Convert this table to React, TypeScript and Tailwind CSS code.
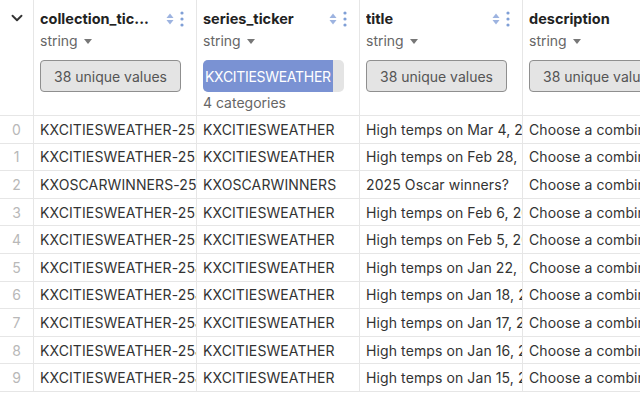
import { ChevronDown } from 'lucide-react';

const rows = [
  ['KXCITIESWEATHER-25MAR04', 'KXCITIESWEATHER', 'High temps on Mar 4, 2025?'],
  ['KXCITIESWEATHER-25FEB28', 'KXCITIESWEATHER', 'High temps on Feb 28, 2025?'],
  ['KXOSCARWINNERS-25', 'KXOSCARWINNERS', '2025 Oscar winners?'],
  ['KXCITIESWEATHER-25FEB06', 'KXCITIESWEATHER', 'High temps on Feb 6, 2025?'],
  ['KXCITIESWEATHER-25FEB05', 'KXCITIESWEATHER', 'High temps on Feb 5, 2025?'],
  ['KXCITIESWEATHER-25JAN22', 'KXCITIESWEATHER', 'High temps on Jan 22, 2025?'],
  ['KXCITIESWEATHER-25JAN18', 'KXCITIESWEATHER', 'High temps on Jan 18, 2025?'],
  ['KXCITIESWEATHER-25JAN17', 'KXCITIESWEATHER', 'High temps on Jan 17, 2025?'],
  ['KXCITIESWEATHER-25JAN16', 'KXCITIESWEATHER', 'High temps on Jan 16, 2025?'],
  ['KXCITIESWEATHER-25JAN15', 'KXCITIESWEATHER', 'High temps on Jan 15, 2025?'],
];

function SortIcons() {
  return (
    <div className="flex items-center gap-[6px] shrink-0 mr-[6px]">
      <svg width="8" height="12" viewBox="0 0 8 12">
        <path d="M4 0.5 L7.5 5 L0.5 5 Z" fill="#9db3e0" />
        <path d="M4 11.5 L7.5 7 L0.5 7 Z" fill="#9db3e0" />
      </svg>
      <svg width="4" height="16" viewBox="0 0 4 16">
        <circle cx="2" cy="2" r="1.6" fill="#7f9fd6" />
        <circle cx="2" cy="8" r="1.6" fill="#7f9fd6" />
        <circle cx="2" cy="14" r="1.6" fill="#7f9fd6" />
      </svg>
    </div>
  );
}

function TypeLabel() {
  return (
    <div className="flex items-center gap-[6px] text-[14px] text-[#666] mt-[3px] leading-[18px]">
      <span>string</span>
      <svg width="8" height="5" viewBox="0 0 8 5">
        <path d="M0 0 L8 0 L4 5 Z" fill="#777" />
      </svg>
    </div>
  );
}

function UniquePill() {
  return (
    <div className="mt-[10px] h-[32px] w-[141px] rounded-[4px] border border-[#8f8f8f] bg-[#e4e4e4] text-[14px] text-[#555] flex items-center justify-center whitespace-nowrap overflow-hidden">
      38 unique values
    </div>
  );
}

function HeaderCell({ name, children, icons = true, width }: { name: string; children: React.ReactNode; icons?: boolean; width: string }) {
  return (
    <div className={`${width} shrink-0 border-r border-[#e6e6e6] px-[6px] pt-[9px] overflow-hidden`}>
      <div className="flex items-center justify-between h-[20px]">
        <span className="font-bold text-[14.5px] text-[#222] whitespace-nowrap overflow-hidden">{name}</span>
        {icons && <SortIcons />}
      </div>
      <TypeLabel />
      {children}
    </div>
  );
}

export default function App() {
  return (
    <div className="w-[640px] h-[400px] overflow-hidden bg-white" style={{ fontFamily: 'Inter, "Noto Sans", sans-serif' }}>
      <div className="flex h-[116px] border-b border-[#e6e6e6]">
        <div className="w-[34px] shrink-0 border-r border-[#e6e6e6] flex justify-center pt-[9px]">
          <ChevronDown className="w-[18px] h-[18px] text-[#333]" strokeWidth={2.5} />
        </div>
        <HeaderCell name="collection_tic..." width="w-[163px]">
          <UniquePill />
        </HeaderCell>
        <HeaderCell name="series_ticker" width="w-[163px]">
          <div className="mt-[10px] h-[32px] w-[141px] rounded-[5px] bg-[#e4e4e4] flex overflow-hidden">
            <div className="w-[130px] bg-[#7a92d3] text-white text-[14px] flex items-center pl-[2px] whitespace-nowrap overflow-hidden tracking-[-0.3px]">
              KXCITIESWEATHER
            </div>
          </div>
          <div className="text-[14px] text-[#666] mt-[2px] leading-[18px]">4 categories</div>
        </HeaderCell>
        <HeaderCell name="title" width="w-[163px]">
          <UniquePill />
        </HeaderCell>
        <HeaderCell name="description" icons={false} width="w-[160px]">
          <UniquePill />
        </HeaderCell>
      </div>
      {rows.map((r, i) => (
        <div key={i} className="flex h-[27.6px] border-b border-[#e6e6e6] text-[14px] text-[#333]">
          <div className="w-[34px] shrink-0 border-r border-[#e6e6e6] flex items-center justify-center text-[#b8b8b8]">{i}</div>
          {r.map((c, j) => (
            <div key={j} className="w-[163px] shrink-0 border-r border-[#e6e6e6] pl-[6px] flex items-center whitespace-nowrap overflow-hidden tracking-[0.1px]">
              {c}
            </div>
          ))}
          <div className="w-[160px] shrink-0 px-[6px] flex items-center whitespace-nowrap overflow-hidden tracking-[0.1px]">
            Choose a combination of outcomes
          </div>
        </div>
      ))}
    </div>
  );
}
